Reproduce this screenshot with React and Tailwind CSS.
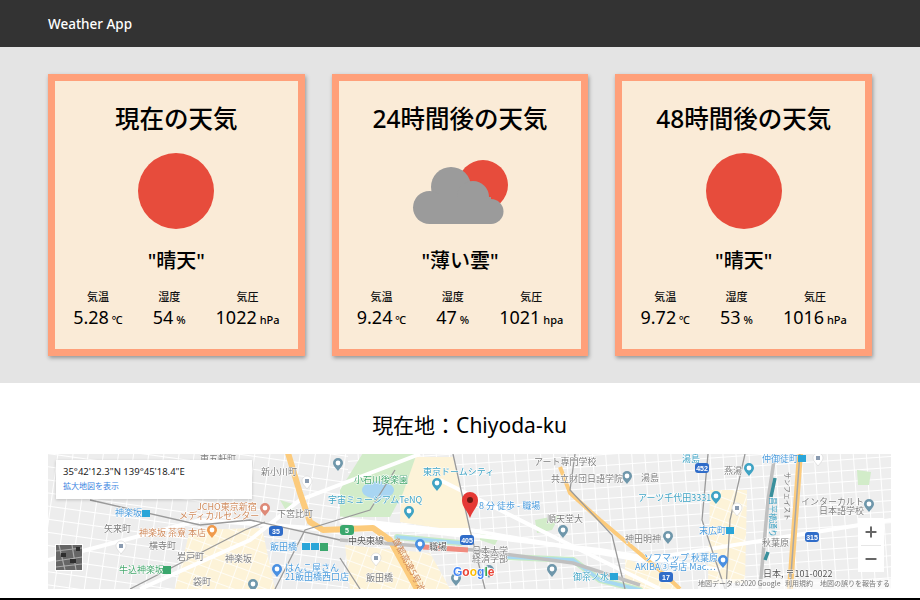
import React from 'react';
import { Plus, Minus } from 'lucide-react';

const FONT = "font-['Noto_Sans','Noto_Sans_CJK_JP',sans-serif]";

const forecasts = [
  { title: '現在の天気', icon: 'sun', desc: '"晴天"', temp: '5.28', hum: '54', press: '1022', unit: 'hPa' },
  { title: '24時間後の天気', icon: 'cloud', desc: '"薄い雲"', temp: '9.24', hum: '47', press: '1021', unit: 'hpa' },
  { title: '48時間後の天気', icon: 'sun', desc: '"晴天"', temp: '9.72', hum: '53', press: '1016', unit: 'hPa' },
];

const CloudSun = () => (
  <svg width="100" height="76" viewBox="0 0 100 76">
    <circle cx="73" cy="32" r="25" fill="#e74c3c" />
    <g fill="#9b9b9b">
      <circle cx="41" cy="34" r="20" />
      <circle cx="63" cy="44" r="16" />
      <circle cx="19.5" cy="54.5" r="16.5" />
      <circle cx="81" cy="58.5" r="12.5" />
      <rect x="19" y="44" width="62" height="27" />
    </g>
  </svg>
);

const Stat = ({ label, value, unit }) => (
  <div className="flex flex-col items-center">
    <div className="h-4 text-[11px] leading-4 font-medium text-[#111]">{label}</div>
    <div className="h-6 text-[18px] leading-6 text-black whitespace-nowrap">
      {value}<span className="text-[11px] font-medium"> {unit}</span>
    </div>
  </div>
);

const WeatherCard = ({ data }) => (
  <div className="flex-1 h-[282px] border-[7px] border-[#ffa07a] bg-[#faebd7] shadow-[1px_2px_4px_rgba(0,0,0,0.35)] flex flex-col items-center pt-5">
    <h2 className="h-9 text-[24.5px] leading-9 font-medium text-black whitespace-nowrap">{data.title}</h2>
    <div className="mt-4 h-[76px] flex justify-center">
      {data.icon === 'sun' ? <div className="w-[76px] h-[76px] rounded-full bg-[#e74c3c]" /> : <CloudSun />}
    </div>
    <div className="mt-[18px] h-7 text-[20px] leading-7 font-medium text-black">{data.desc}</div>
    <div className="mt-[14px] flex justify-center gap-[30px]">
      <Stat label="気温" value={data.temp} unit="℃" />
      <Stat label="湿度" value={data.hum} unit="%" />
      <Stat label="気圧" value={data.press} unit={data.unit} />
    </div>
  </div>
);

// map labels, page coordinates: x, center y, text, colour
const GRAY = '#7c7c7c';
const TEAL = '#3fa3c4';
const BLUE = '#4a9bdc';
const ORANGE = '#cf8a5c';
const GREEN = '#45a86e';
const DARK = '#555';
const labels = [
  [200, 459, '東五軒町', GRAY], [261, 472, '新小川町', GRAY], [115, 513, '神楽坂', BLUE],
  [197, 507, 'JCHO東京新宿', ORANGE], [179, 516, 'メディカルセンター', ORANGE], [277, 514, '下宮比町', GRAY],
  [104, 529, '矢来町', GRAY], [139, 533, '神楽坂 茶寮 本店', ORANGE], [149, 546, '横寺町', GRAY],
  [177, 557, '岩戸町', GRAY], [225, 559, '神楽坂', GRAY], [270, 547, '飯田橋', BLUE],
  [119, 570, '牛込神楽坂', GREEN], [285, 568, 'はんこ屋さん', BLUE], [285, 577, '21飯田橋西口店', BLUE],
  [193, 582, '袋町', GRAY], [328, 500, '宇宙ミュージアムTeNQ', TEAL], [354, 480, '小石川後楽園', GREEN],
  [423, 472, '東京ドームシティ', TEAL], [479, 506, '8 分 徒歩 - 職場', BLUE], [534, 462, 'アート専門学校', GRAY],
  [551, 479, '共立財団日語学院', GRAY], [547, 519, '順天堂大', GRAY], [348, 541, '中央東線', DARK],
  [429, 547, '職場', DARK], [472, 551, '日本大学', GRAY], [472, 559, '経済学部', GRAY],
  [366, 578, '飯田橋', GRAY], [573, 577, '御茶ノ水', TEAL], [682, 459, '湯島', TEAL],
  [762, 459, '仲御徒町', BLUE], [724, 471, '燕湯', GRAY], [641, 478, '湯島', GRAY],
  [638, 498, 'アーツ千代田3331', TEAL], [801, 502, 'インターカルト', GRAY], [819, 511, '日本語学校', GRAY],
  [699, 531, '末広町', BLUE], [762, 543, '秋葉原', GRAY], [625, 539, '神田明神', GRAY],
  [644, 558, 'ソフマップ 秋葉原', BLUE], [635, 567, 'AKIBA③号店 Mac…', BLUE], [763, 574, '日本, 〒101-0022', DARK],
];

const PIN_GRAY = '#6f97ab';
const pins = [
  [338, 465, PIN_GRAY], [409, 513, TEAL], [437, 485, TEAL], [627, 478, PIN_GRAY],
  [563, 532, PIN_GRAY], [552, 571, PIN_GRAY], [489, 572, PIN_GRAY], [456, 580, PIN_GRAY],
  [265, 510, '#de8a78'], [212, 532, '#ef9a4c'], [277, 571, '#4a90e2'], [420, 546, '#4a90e2'],
  [749, 470, TEAL], [716, 498, TEAL], [668, 538, PIN_GRAY], [869, 506, PIN_GRAY], [723, 562, '#4a90e2'],
  [253, 586, PIN_GRAY],
];

const whitePins = [[307, 483], [818, 460], [737, 510], [121, 548], [376, 560]];

const shields = [
  [347, 530, '5', '#3aa76d'], [276, 531, '35', '#2f6cc9'], [467, 540, '405', '#2f6cc9'],
  [702, 468, '452', '#2f6cc9'], [812, 537, '315', '#2f6cc9'], [666, 577, '17', '#2f6cc9'],
];

const metroBadges = [[142, 510], [302, 543], [311, 543], [726, 527], [798, 455], [610, 573]];
const trainBadges = [[163, 566], [320, 543]];

const MapPin = ({ x, y, color }) => (
  <g>
    <path d={`M${x - 5} ${y - 2} a5 5 0 1 1 10 0 c0 3 -3 5 -5 8 c-2 -3 -5 -5 -5 -8z`} fill={color} />
    <circle cx={x} cy={y - 2} r="2.4" fill="#fff" />
  </g>
);

const WhitePin = ({ x, y }) => (
  <g>
    <path d={`M${x - 5} ${y - 2} a5 5 0 1 1 10 0 c0 3 -3 5 -5 8 c-2 -3 -5 -5 -5 -8z`} fill="#fff" stroke="#ccc" strokeWidth="0.5" />
    <rect x={x - 2} y={y - 4} width="4" height="4" fill="#8a9bb0" />
  </g>
);

const MapDrawing = () => (
  <svg className="block blur-[0.5px]" width="843" height="135" viewBox="48 454 843 135">
    <defs>
      <pattern id="blocks" width="15" height="13" patternUnits="userSpaceOnUse" patternTransform="rotate(8)">
        <rect width="15" height="13" fill="#ededed" />
        <path d="M0 0H15M0 0V13" stroke="#fff" strokeWidth="2" />
      </pattern>
      <pattern id="blocks2" width="13" height="11" patternUnits="userSpaceOnUse" patternTransform="rotate(-4)">
        <rect width="13" height="11" fill="#eeeeee" />
        <path d="M0 0H13M0 0V11" stroke="#fff" strokeWidth="2" />
      </pattern>
      <pattern id="tint" width="13" height="11" patternUnits="userSpaceOnUse" patternTransform="rotate(20)">
        <rect width="13" height="11" fill="#fdf3d8" />
        <path d="M0 0H13M0 0V11" stroke="#fff" strokeWidth="1.5" />
      </pattern>
    </defs>
    <rect x="48" y="454" width="300" height="135" fill="url(#blocks)" />
    <rect x="348" y="454" width="543" height="135" fill="url(#blocks2)" />

    {/* neighbourhood tints */}
    <g fill="url(#tint)">
      <path d="M190 530L262 528L275 589L175 589Z" />
      <path d="M710 490L747 490L745 583L708 583Z" />
      <path d="M345 545L430 553L450 589L350 589Z" />
      <path d="M625 558L665 575L680 589L625 589Z" />
    </g>
    <path d="M403 457L453 457L470 533L400 522Z" fill="#fdf3d8" />
    <g fill="#d2ecc9">
      <path d="M363 453L417 453L403 493L390 517L340 517L340 490Z" />
      <path d="M535 520L560 515L552 530L537 533Z" />
      <path d="M480 530L500 535L495 545L480 540Z" />
      <path d="M280 500L296 505L288 514Z" />
      <path d="M857 470L871 472L869 485L858 485Z" />
    </g>
    <ellipse cx="378" cy="490" rx="16" ry="9" fill="#a8d5f2" />

    {/* roads */}
    <g fill="none" stroke="#fff" strokeWidth="4">
      <path d="M48 560L200 520L340 530L470 530L640 560L891 520" />
      <path d="M140 589L250 540L300 500L420 454" />
      <path d="M440 480L560 540L660 589" />
      <path d="M340 520L470 535" strokeWidth="7" />
      <path d="M470 535L600 550L720 570" />
    </g>
    <g fill="none" stroke="#fccb7c" strokeLinejoin="round">
      <path d="M288 453L300 493L310 522L323 530L373 528L390 540L417 589" strokeWidth="6" />
      <path d="M560 467L570 493L600 520L663 573L680 589" strokeWidth="4" />
      <path d="M800 453L793 547L790 589" strokeWidth="6" />
    </g>
    <path d="M800 453L793 547L790 589" fill="none" stroke="#a8a8a8" strokeWidth="1.5" />

    {/* river */}
    <g fill="none" strokeLinecap="round">
      <path d="M397 537L460 543M507 557L573 560L600 580L640 590" stroke="#c9ebc5" strokeWidth="6" />
      <path d="M397 537L460 543M507 557L573 560L600 580L640 590" stroke="#a6d8f2" strokeWidth="3.5" />
    </g>

    {/* rail and thin grey roads */}
    <g fill="none" stroke="#9a9a9a" strokeWidth="1.3">
      <path d="M90 500L200 525L250 520L340 540" />
      <path d="M130 589L245 530L265 522" />
      <path d="M453 454L470 530L485 589" />
      <path d="M275 589L305 530L370 510L395 470" />
      <path d="M575 454L570 490L612 535L625 589" />
      <path d="M708 454L702 520L725 589" />
      <path d="M745 454L730 520L726 589" />
      <path d="M340 558L360 589" />
    </g>
    <g fill="none" stroke="#c0c0c0" strokeWidth="3.5">
      <path d="M340 540L473 550L573 563L640 585" />
      <path d="M775 454L768 500L760 589" />
    </g>
    <path d="M423 547L468 550" stroke="#f08c80" strokeWidth="5" />
    <path d="M775 478L771 497M768 552L765 560" stroke="#3a909c" strokeWidth="3.5" />

    {pins.map(([x, y, c], i) => <MapPin key={i} x={x} y={y} color={c} />)}
    {whitePins.map(([x, y], i) => <WhitePin key={i} x={x} y={y} />)}

    <g fontSize="9" fontFamily="'Noto Sans CJK JP', sans-serif">
      {labels.map(([x, y, t, c], i) => (
        <text key={i} x={x} y={y + 3} fill={c} stroke="#fff" strokeWidth="1" paintOrder="stroke">{t}</text>
      ))}
      <text x="392" y="540" fill={ORANGE} transform="rotate(62 392 540)">首都高速5号池袋線</text>
      <text x="785" y="472" fill={GRAY} fontSize="7" transform="rotate(90 785 472)">サンフェイスト</text>
      <text x="770" y="497" fill={TEAL} fontSize="8" transform="rotate(90 770 497)">昌平橋通り</text>
    </g>

    {shields.map(([x, y, t, c], i) => (
      <g key={i}>
        <rect x={x - 7} y={y - 5} width="14" height="10" rx="3" fill={c} />
        <text x={x} y={y + 3} textAnchor="middle" fontSize="7" fontWeight="700" fill="#fff" fontFamily="'Liberation Sans', sans-serif">{t}</text>
      </g>
    ))}

    {metroBadges.map(([x, y], i) => <rect key={i} x={x} y={y} width="8" height="7" fill="#2aa5d8" />)}
    {trainBadges.map(([x, y], i) => <rect key={i} x={x} y={y} width="8" height="8" fill="#3aa76d" />)}

    {/* destination marker */}
    <path d="M470 518C467 510 462 507 462 500a8 8 0 1 1 16 0C478 507 473 510 470 518Z" fill="#e53935" />
    <circle cx="470" cy="500" r="3" fill="#6b1a12" />

    <text x="453" y="576" fontSize="12" fontWeight="700" fontFamily="'Liberation Sans', sans-serif" stroke="#fff" strokeWidth="1.5" paintOrder="stroke">
      <tspan fill="#4285f4">G</tspan><tspan fill="#ea4335">o</tspan><tspan fill="#fbbc05">o</tspan><tspan fill="#4285f4">g</tspan><tspan fill="#34a853">l</tspan><tspan fill="#ea4335">e</tspan>
    </text>

    <rect x="698" y="579" width="193" height="10" fill="#fff" opacity="0.65" />
    <g fontSize="7" fill="#777" fontFamily="'Noto Sans CJK JP', sans-serif">
      <text x="698" y="586">地図データ ©2020 Google</text>
      <text x="785" y="586">利用規約</text>
      <text x="820" y="586">地図の誤りを報告する</text>
    </g>
  </svg>
);

const App = () => (
  <div className={`${FONT} w-[920px] h-[600px] overflow-hidden flex flex-col bg-white`}>
    <header className="h-[47px] bg-[#333333] flex items-center pl-12 pt-px">
      <span className="text-[13.5px] font-medium text-white">Weather App</span>
    </header>

    <section className="bg-[#e4e4e4] px-12 py-[27px] flex gap-[27px]">
      {forecasts.map(f => <WeatherCard key={f.title} data={f} />)}
    </section>

    <section className="flex-1 px-12">
      <h2 className="w-[843px] h-[71px] pt-7 text-center text-[21px] leading-7 text-black">現在地：Chiyoda-ku</h2>
      <div className="relative w-[843px] h-[135px] overflow-hidden">
        <MapDrawing />
        <div className="absolute left-2 top-[6px] w-[196px] h-[39px] bg-white shadow-[0_1px_3px_rgba(0,0,0,0.2)] px-[7px] pt-[5px]">
          <div className="text-[9.5px] leading-[14px] text-[#222]">35°42'12.3"N 139°45'18.4"E</div>
          <div className="text-[8px] leading-[14px] text-[#3a84df]">拡大地図を表示</div>
        </div>
        <div className="absolute left-[7px] top-[90px] w-[28px] h-[27px] border border-white bg-[#666] overflow-hidden">
          <svg className="blur-[0.5px]" width="26" height="25" viewBox="0 0 26 25">
            <path d="M0 6L26 3M3 0L9 25M0 16L26 12M16 0L20 25M0 22L26 19" stroke="#aaa" strokeWidth="1.2" />
            <path d="M5 8h5v4H5zM14 14h6v4h-6zM20 2h4v4h-4z" fill="#2e2e2e" />
          </svg>
        </div>
        <div className="absolute left-[810px] top-16 w-[26px] h-[54px] bg-white flex flex-col items-center">
          <div className="h-[27px] flex items-center"><Plus size={16} strokeWidth={3} color="#666" /></div>
          <div className="w-5 h-px bg-[#e6e6e6]" />
          <div className="h-[26px] flex items-center"><Minus size={16} strokeWidth={3} color="#666" /></div>
        </div>
      </div>
    </section>

    <div className="h-[2px] bg-black" />
  </div>
);

export default App;
